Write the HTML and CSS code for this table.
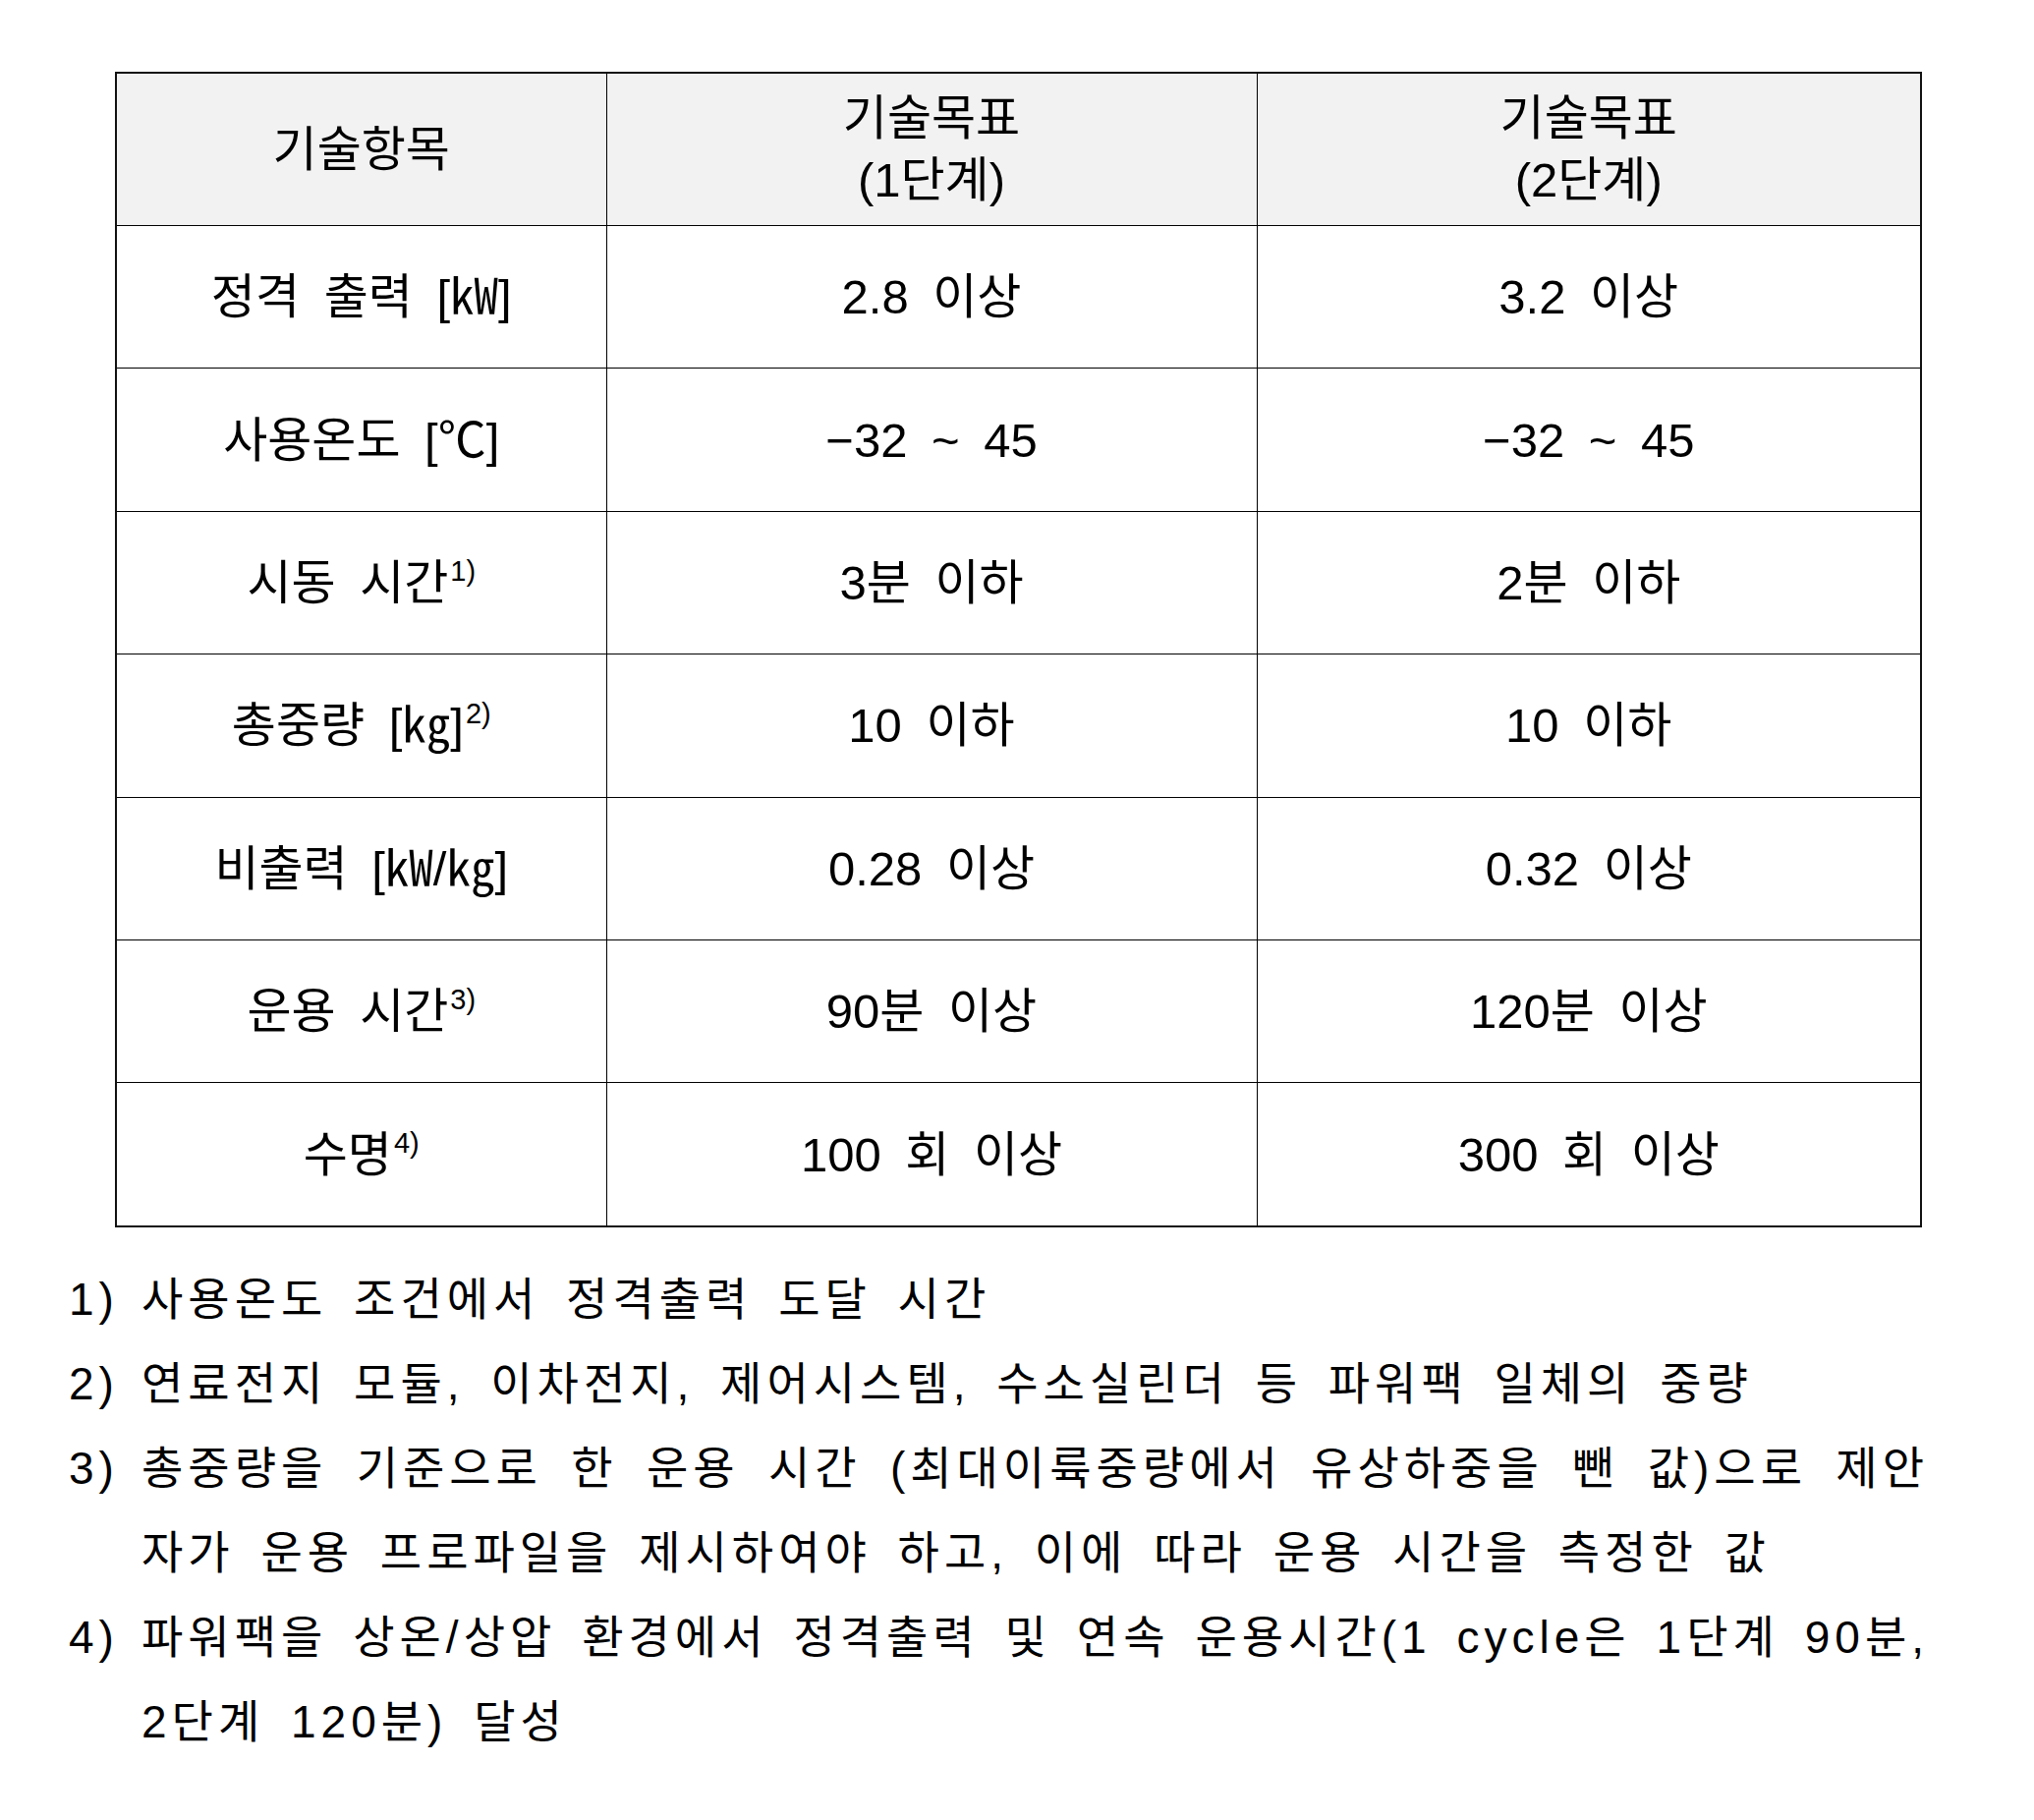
FILE: index.html
```html
<!DOCTYPE html>
<html lang="ko">
<head>
<meta charset="utf-8">
<title>기술목표</title>
<link rel="stylesheet" href="styles.css">
</head>
<body>
<div class="page">
  <table class="spec">
    <colgroup>
      <col class="c1"><col class="c2"><col class="c3">
    </colgroup>
    <thead>
      <tr>
        <th>기술항목</th>
        <th>기술목표<br>(1단계)</th>
        <th>기술목표<br>(2단계)</th>
      </tr>
    </thead>
    <tbody>
      <tr><td>정격 출력 [㎾]</td><td>2.8 이상</td><td>3.2 이상</td></tr>
      <tr><td>사용온도 [℃]</td><td>−32 ~ 45</td><td>−32 ~ 45</td></tr>
      <tr><td>시동 시간<sup>1)</sup></td><td>3분 이하</td><td>2분 이하</td></tr>
      <tr><td>총중량 [㎏]<sup>2)</sup></td><td>10 이하</td><td>10 이하</td></tr>
      <tr><td>비출력 [㎾/㎏]</td><td>0.28 이상</td><td>0.32 이상</td></tr>
      <tr><td>운용 시간<sup>3)</sup></td><td>90분 이상</td><td>120분 이상</td></tr>
      <tr><td>수명<sup>4)</sup></td><td>100 회 이상</td><td>300 회 이상</td></tr>
    </tbody>
  </table>

  <div class="notes">
    <p class="note"><span class="line first"><span class="num">1)</span>사용온도 조건에서 정격출력 도달 시간</span></p>
    <p class="note"><span class="line first"><span class="num">2)</span>연료전지 모듈, 이차전지, 제어시스템, 수소실린더 등 파워팩 일체의 중량</span></p>
    <p class="note"><span class="line first just"><span class="num">3)</span>총중량을 기준으로 한 운용 시간 (최대이륙중량에서 유상하중을 뺀 값)으로 제안</span><span class="line">자가 운용 프로파일을 제시하여야 하고, 이에 따라 운용 시간을 측정한 값</span></p>
    <p class="note"><span class="line first just"><span class="num">4)</span>파워팩을 상온/상압 환경에서 정격출력 및 연속 운용시간(1 cycle은 1단계 90분,</span><span class="line">2단계 120분) 달성</span></p>
  </div>
</div>
</body>
</html>
```

FILE: styles.css
```css
html, body {
  margin: 0;
  padding: 0;
  background: #ffffff;
}

body {
  font-family: "Liberation Sans", "Noto Sans CJK KR", sans-serif;
  color: #000000;
}

.page {
  padding: 73px 0 0 117px;
  width: 1846px;
}

.spec {
  border-collapse: collapse;
  border: 2px solid #111111;
  table-layout: fixed;
  width: 1837px;
  font-size: 49px;
  word-spacing: 11px;
}

.c1 { width: 499px; }
.c2 { width: 662px; }
.c3 { width: 676px; }

.spec th,
.spec td {
  border: 1px solid #000000;
  padding: 0;
  text-align: center;
  vertical-align: middle;
  font-weight: normal;
}

.spec thead th {
  background: #f2f2f2;
  height: 154px;
  line-height: 63px;
}

.spec tbody td {
  height: 144.4px;
  line-height: 60px;
}

.spec sup {
  font-size: 29px;
  word-spacing: 0;
  vertical-align: 19px;
  line-height: 0;
  margin-left: 2px;
}

.notes {
  margin: 30px 0 0 -47px;
  width: 1893px;
}

.note {
  margin: 0;
  padding-left: 74px;
  font-size: 46px;
  letter-spacing: 5px;
  word-spacing: 9px;
  line-height: 86px;
}

.line {
  display: block;
  white-space: nowrap;
}

.first {
  margin-left: -74px;
}

.num {
  display: inline-block;
  width: 74px;
}

.just {
  word-spacing: -6px;
  text-align: justify;
  text-align-last: justify;
}
```
